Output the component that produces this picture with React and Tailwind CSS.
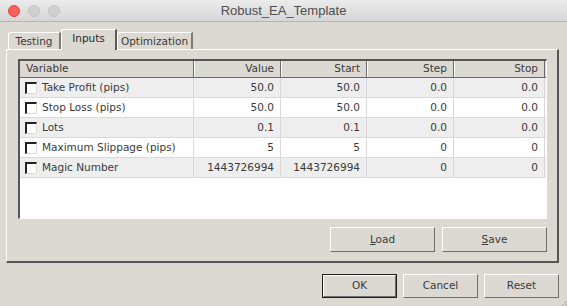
import React from "react";

const rows = [
  { name: "Take Profit (pips)", value: "50.0", start: "50.0", step: "0.0", stop: "0.0" },
  { name: "Stop Loss (pips)", value: "50.0", start: "50.0", step: "0.0", stop: "0.0" },
  { name: "Lots", value: "0.1", start: "0.1", step: "0.0", stop: "0.0" },
  { name: "Maximum Slippage (pips)", value: "5", start: "5", step: "0", stop: "0" },
  { name: "Magic Number", value: "1443726994", start: "1443726994", step: "0", stop: "0" },
];

const cols = "grid grid-cols-[174px_87px_86px_87px_91px]";

function Tab({ label, selected, className = "" }) {
  if (selected) {
    return (
      <div
        className={`relative z-10 -mb-px flex h-[21px] items-center justify-center rounded-tl-[3px] border-l border-t border-r-2 border-l-white border-t-white border-r-[#5a5a5a] bg-[#dcd9d3] pb-[3px] text-[#2a2a2a] ${className}`}
      >
        {label}
      </div>
    );
  }
  return (
    <div
      className={`flex h-[17px] items-center justify-center rounded-tl-[3px] border-l border-t border-r-2 border-l-white border-t-white border-r-[#7a7a7a] bg-[#dcd9d3] pt-[1px] text-[#3a3a3a] ${className}`}
    >
      {label}
    </div>
  );
}

function Button({ children, className = "", isDefault }) {
  return (
    <div
      className={`flex items-center justify-center text-[#3a3a3a] ${
        isDefault ? "border border-[#1e1e1e]" : ""
      } ${className}`}
    >
      <div className="flex h-full w-full items-center justify-center border-l border-t border-r border-b border-l-white border-t-white border-r-[#6e6e6e] border-b-[#6e6e6e] bg-[#dcd9d3]">
        {children}
      </div>
    </div>
  );
}

function Checkbox() {
  return (
    <div className="h-[12px] w-[12px] shrink-0 border-l-2 border-t-2 border-r border-b border-l-[#222] border-t-[#222] border-r-[#dcdcdc] border-b-[#dcdcdc] bg-white"></div>
  );
}

export default function App() {
  return (
    <div
      className="relative flex h-[306px] w-[567px] flex-col overflow-hidden bg-[#dcd9d3] text-[10.5px]"
      style={{ fontFamily: '"DejaVu Sans", sans-serif' }}
    >
      {/* title bar */}
      <div className="relative flex h-[22px] shrink-0 items-center gap-[8px] border-b border-[#b4b4b4] bg-gradient-to-b from-[#ececec] to-[#d6d6d6] pl-[8px]">
        <div className="h-[12px] w-[12px] rounded-full border border-[#e2463f] bg-[#fc605c]"></div>
        <div className="h-[12px] w-[12px] rounded-full border border-[#c4c4c4] bg-[#d0d0d0]"></div>
        <div className="h-[12px] w-[12px] rounded-full border border-[#c4c4c4] bg-[#d0d0d0]"></div>
        <div
          className="absolute inset-0 flex items-center justify-center text-[13px] text-[#4d4d4d]"
          style={{ fontFamily: '"Liberation Sans", sans-serif' }}
        >
          Robust_EA_Template
        </div>
      </div>

      <div className="flex flex-col px-[6px]">
        {/* tabs */}
        <div className="mt-[6px] flex h-[21px] items-end pl-[2px]">
          <Tab label="Testing" className="w-[53px]" />
          <Tab label="Inputs" selected className="w-[56px]" />
          <Tab label="Optimization" className="w-[76px]" />
        </div>

        {/* panel */}
        <div className="flex h-[214px] w-[553px] flex-col border-l border-t border-r-2 border-b-2 border-l-white border-t-white border-r-[#555] border-b-[#555] pl-[11px] pt-[9px]">
          <div className="flex h-[160px] w-[529px] flex-col border-l-2 border-t-2 border-r border-b border-l-[#555] border-t-[#555] border-r-white border-b-white bg-white">
            <div className={`${cols} h-[17px] border-b border-[#6a6a6a] bg-[#dcd9d3] text-[#3a3a3a]`}>
              {["Variable", "Value", "Start", "Step", "Stop"].map((h, i) => (
                <div
                  key={h}
                  className={`flex items-center border-r border-r-[#6a6a6a] ${
                    i === 0 ? "justify-start pl-[6px]" : "justify-end border-l border-l-white pr-[6px]"
                  }`}
                >
                  {h}
                </div>
              ))}
            </div>
            {rows.map((r, idx) => (
              <div
                key={r.name}
                className={`${cols} h-[20px] border-b border-[#d9d9d9] text-[#3a3a3a] ${
                  idx % 2 === 0 ? "bg-[#eeeeee]" : "bg-white"
                }`}
              >
                <div className="flex items-center gap-[5px] border-r border-[#d9d9d9] pl-[5px]">
                  <Checkbox />
                  <span className="pt-[1px]">{r.name}</span>
                </div>
                {[r.value, r.start, r.step, r.stop].map((v, i) => (
                  <div key={i} className="flex items-center justify-end border-r border-[#d9d9d9] pr-[6px] pt-[1px]">
                    {v}
                  </div>
                ))}
              </div>
            ))}
          </div>

          <div className="mt-[8px] flex w-[529px] justify-end gap-[7px]">
            <Button className="h-[25px] w-[105px]">
              <span>
                <span className="underline">L</span>oad
              </span>
            </Button>
            <Button className="h-[25px] w-[105px]">
              <span>
                <span className="underline">S</span>ave
              </span>
            </Button>
          </div>
        </div>
      </div>

      {/* dialog buttons */}
      <div className="mt-[11px] flex justify-end gap-[6px] pr-[8px]">
        <Button isDefault className="h-[24px] w-[75px]">OK</Button>
        <Button className="h-[24px] w-[75px]">Cancel</Button>
        <Button className="h-[24px] w-[75px]">Reset</Button>
      </div>

      <svg className="absolute bottom-0 right-0" width="6" height="6" viewBox="0 0 6 6">
        <path d="M6 1 L1 6 M6 4 L4 6" stroke="#a8a8a8" strokeWidth="1" />
      </svg>
    </div>
  );
}
